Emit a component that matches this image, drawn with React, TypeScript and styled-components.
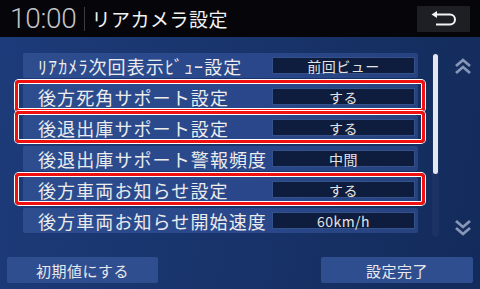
import React from "react";
import styled, { createGlobalStyle } from "styled-components";

const GlobalStyle = createGlobalStyle`
  html, body {
    margin: 0;
    padding: 0;
    background: #05050a;
  }
  body {
    font-family: "Noto Sans CJK JP", "Noto Sans", sans-serif;
  }
`;

const Screen = styled.div`
  width: 480px;
  height: 289px;
  display: flex;
  flex-direction: column;
  overflow: hidden;
  background: linear-gradient(100deg, #1d3b7a 0%, #183369 55%, #132b5b 100%);
`;

const Header = styled.header`
  height: 37px;
  flex: none;
  background: #05050a;
  display: flex;
  align-items: center;
  padding: 0 10px;
  box-sizing: border-box;
`;

const Clock = styled.div`
  font-family: Roboto, "Noto Sans", sans-serif;
  font-weight: 300;
  font-size: 28px;
  color: #c4c4c8;
  letter-spacing: -0.3px;
  padding-right: 7px;
`;

const Divider = styled.div`
  width: 1px;
  height: 24px;
  background: #3c3c44;
  margin-right: 7px;
`;

const Title = styled.h1`
  margin: 0;
  font-size: 19px;
  font-weight: 400;
  color: #f2f2f2;
  letter-spacing: 0.5px;
  flex: 1;
`;

const BackButton = styled.button`
  width: 53px;
  height: 26px;
  border: none;
  border-radius: 1px;
  background: #1e1f25;
  display: flex;
  align-items: center;
  justify-content: center;
  padding: 0;
`;

const Main = styled.main`
  flex: 1;
  display: flex;
  padding: 16px 0 0 23px;
`;

const List = styled.ul`
  list-style: none;
  margin: 0;
  padding: 0;
  width: 395px;
  display: flex;
  flex-direction: column;
  gap: 6px;
`;

const Row = styled.li`
  position: relative;
  height: 25px;
  display: flex;
  align-items: center;
  background: linear-gradient(90deg, #2d4d8f 0%, #29478a 60%, #26427f 100%);
  border-radius: 2px;
`;

const Highlight = styled.div`
  position: absolute;
  left: -8px;
  right: -7px;
  top: -4px;
  bottom: -3px;
  border: 3px solid #f01010;
  border-radius: 4px;
  box-shadow: 0 0 0 1px #ffffff, inset 0 0 0 1px #ffffff;
  pointer-events: none;
`;

const Label = styled.span`
  flex: 1;
  padding-left: 15px;
  font-size: 18px;
  letter-spacing: 1.1px;
  color: #ececec;
  white-space: nowrap;
`;

const Value = styled.span`
  width: 143px;
  height: 17px;
  margin-right: 3px;
  box-sizing: border-box;
  border: 1px solid #34518c;
  background: #0e1d3d;
  display: flex;
  align-items: center;
  justify-content: center;
  font-size: 14px;
  color: #e4e4e4;
  letter-spacing: 0.5px;
`;

const ScrollTrack = styled.div`
  width: 7px;
  height: 184px;
  margin-left: 14px;
  border-radius: 4px;
  background: #1c3164;
  display: flex;
  justify-content: center;
`;

const ScrollThumb = styled.div`
  width: 5px;
  height: 120px;
  margin-top: 1px;
  border-radius: 3px;
  background: #e6e8f0;
`;

const Arrows = styled.div`
  width: 18px;
  margin-left: 15px;
  height: 184px;
  display: flex;
  flex-direction: column;
  justify-content: space-between;
  padding-top: 4px;
  box-sizing: border-box;
`;

const Footer = styled.footer`
  flex: none;
  display: flex;
  justify-content: space-between;
  padding: 0 7px 6px 7px;
`;

const FooterButton = styled.button<{ $width: number }>`
  width: ${(p) => p.$width}px;
  height: 26px;
  border: none;
  border-radius: 2px;
  background: #2f4e8f;
  color: #e8e8ec;
  font-family: "Noto Sans CJK JP", "Noto Sans", sans-serif;
  font-size: 15px;
  letter-spacing: 0.5px;
  padding: 0;
`;

const Chevron = ({ down }: { down?: boolean }) => (
  <svg width="18" height="18" viewBox="0 0 18 18" style={{ transform: down ? "rotate(180deg)" : undefined }}>
    <path d="M2 9 L9 3 L16 9 M2 16 L9 10 L16 16" fill="none" stroke="#8795b6" strokeWidth="2.8" />
  </svg>
);

const BackIcon = () => (
  <svg width="26" height="15" viewBox="0 0 26 15">
    <path d="M0.5 3.5 L6 0 L6 7 Z" fill="#f4f4f4" />
    <path d="M5 3.5 H19 A5 5 0 0 1 19 13.5 H5" fill="none" stroke="#f4f4f4" strokeWidth="2" />
  </svg>
);

const rows = [
  { label: "ﾘｱｶﾒﾗ次回表示ﾋﾞｭｰ設定", value: "前回ビュー", hl: false },
  { label: "後方死角サポート設定", value: "する", hl: true },
  { label: "後退出庫サポート設定", value: "する", hl: true },
  { label: "後退出庫サポート警報頻度", value: "中間", hl: false },
  { label: "後方車両お知らせ設定", value: "する", hl: true },
  { label: "後方車両お知らせ開始速度", value: "60km/h", hl: false },
];

export default function App() {
  return (
    <>
      <GlobalStyle />
      <Screen>
        <Header>
          <Clock>10:00</Clock>
          <Divider />
          <Title>リアカメラ設定</Title>
          <BackButton>
            <BackIcon />
          </BackButton>
        </Header>
        <Main>
          <List>
            {rows.map((r) => (
              <Row key={r.label}>
                <Label>{r.label}</Label>
                <Value>{r.value}</Value>
                {r.hl && <Highlight />}
              </Row>
            ))}
          </List>
          <ScrollTrack>
            <ScrollThumb />
          </ScrollTrack>
          <Arrows>
            <Chevron />
            <Chevron down />
          </Arrows>
        </Main>
        <Footer>
          <FooterButton $width={151}>初期値にする</FooterButton>
          <FooterButton $width={152}>設定完了</FooterButton>
        </Footer>
      </Screen>
    </>
  );
}
